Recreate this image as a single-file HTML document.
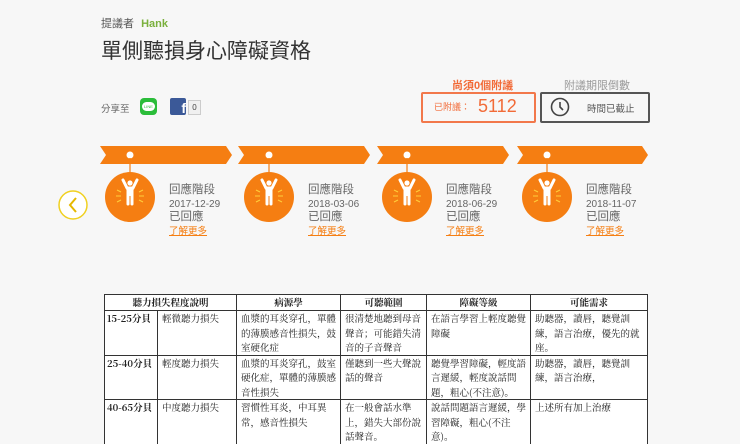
<!DOCTYPE html>
<html style="overflow:hidden;height:444px"><head><meta charset="utf-8"><style>
body{margin:0;width:740px;height:444px;background:#f7f7f7;font-family:"Liberation Sans","Noto Sans CJK TC",sans-serif;position:relative;overflow:hidden;color:#444}
.a{position:absolute;white-space:nowrap}
table{position:absolute;left:104px;top:294px;width:544px;border-collapse:collapse;background:#fff;font-family:"Noto Serif CJK SC","Noto Sans CJK TC",serif;font-size:9.5px;color:#222;table-layout:fixed}
td{border:1px solid #333;vertical-align:top;padding:0 4px;line-height:14.5px}
th{border:1px solid #333;font-weight:bold;font-size:9.5px;height:15px;padding:0;line-height:15px}
.t{font-size:11.5px;line-height:13.5px;color:#666}
</style></head><body>
<div class="a" style="left:101px;top:15px;font-size:11px;color:#555">提議者 <span style="color:#7ab03c;font-weight:bold;margin-left:4px">Hank</span></div>
<div class="a" style="left:101px;top:35px;font-size:21px;color:#333">單側聽損身心障礙資格</div>
<div class="a" style="left:101px;top:101px;font-size:9.5px;color:#666">分享至</div>
<div class="a" style="left:140px;top:98px;width:17px;height:17px;background:#2bbd3a;border-radius:4px"><div style="margin:4px 2px;height:9px;background:#fff;border-radius:5px;font-size:4px;color:#2bbd3a;text-align:center;line-height:9px">LINE</div></div>
<div class="a" style="left:170px;top:98px;width:16px;height:17px;background:#3b5998;border-radius:2px;color:#fff;font-weight:bold;font-size:14px;text-align:right;line-height:20px;overflow:hidden">f</div>
<div class="a" style="left:188px;top:100px;width:11px;height:13px;border:1px solid #ccc;background:#f0f0f0;font-size:8px;text-align:center;line-height:13px">0</div>
<div class="a" style="left:452px;top:77px;font-size:11px;color:#f26b38;font-weight:bold">尚須0個附議</div>
<div class="a" style="left:421px;top:92px;width:111px;height:27px;border:2px solid #f2784b;border-radius:2px;"></div>
<div class="a" style="left:434px;top:100px;font-size:9px;color:#f26b38">已附議：</div>
<div class="a" style="left:478px;top:96px;font-size:18px;color:#f26b38">5112</div>
<div class="a" style="left:564px;top:77px;font-size:11px;color:#999">附議期限倒數</div>
<div class="a" style="left:540px;top:92px;width:106px;height:27px;border:2px solid #555;border-radius:2px"></div>
<svg class="a" style="left:549px;top:96px" width="24" height="22" viewBox="0 0 24 22"><circle cx="11" cy="11" r="8.5" fill="none" stroke="#444" stroke-width="1.6"/><path d="M11 6v5l3 3" fill="none" stroke="#444" stroke-width="1.6"/></svg>
<div class="a" style="left:587px;top:101px;font-size:9.5px;color:#555">時間已截止</div>
<svg class="a" style="left:0;top:0" width="740" height="260">
<g fill="#f57e12">
<polygon points="100,146 226,146 232,155 226,164 100,164 106,155"/>
<polygon points="238,146 364,146 370,155 364,164 238,164 244,155"/>
<polygon points="377,146 503,146 509,155 503,164 377,164 383,155"/>
<polygon points="517,146 642,146 648,155 642,164 517,164 523,155"/>
</g>
<g id="n">
<circle cx="130" cy="155" r="3.5" fill="#fff"/><line x1="130" y1="158" x2="130" y2="172" stroke="#f57e12" stroke-width="1.2"/>
<circle cx="130" cy="197" r="25" fill="#f57e12"/>
<g fill="none" stroke="#fff" stroke-width="3" stroke-linecap="round"><path d="M123 180l4 8h6l4-8"/><path d="M128 190v14M132 190v14"/></g>
<circle cx="130" cy="183" r="2.6" fill="#fff"/><rect x="126.5" y="187" width="7" height="9" fill="#fff"/>
<g stroke="#ffcf3a" stroke-width="1"><path d="M117 190l4 2M116 196h5M117 202l4-2M143 190l-4 2M144 196h-5M143 202l-4-2"/></g>
</g>
<use href="#n" x="139"/><use href="#n" x="277"/><use href="#n" x="417"/>
<circle cx="73" cy="205" r="14" fill="#fff" stroke="#f0d020" stroke-width="1.5"/>
<path d="M76 198l-6 7 6 7" fill="none" stroke="#e6b800" stroke-width="2"/>
</svg>
<div class="a t" style="left:169px;top:184px">回應階段<br><span style="font-size:10px">2017-12-29</span><br>已回應<br><span style="color:#f57e12;text-decoration:underline;font-size:9.5px">了解更多</span></div>
<div class="a t" style="left:308px;top:184px">回應階段<br><span style="font-size:10px">2018-03-06</span><br>已回應<br><span style="color:#f57e12;text-decoration:underline;font-size:9.5px">了解更多</span></div>
<div class="a t" style="left:446px;top:184px">回應階段<br><span style="font-size:10px">2018-06-29</span><br>已回應<br><span style="color:#f57e12;text-decoration:underline;font-size:9.5px">了解更多</span></div>
<div class="a t" style="left:586px;top:184px">回應階段<br><span style="font-size:10px">2018-11-07</span><br>已回應<br><span style="color:#f57e12;text-decoration:underline;font-size:9.5px">了解更多</span></div>
<table>
<colgroup><col style="width:53px"><col style="width:79px"><col style="width:104px"><col style="width:86px"><col style="width:104px"><col></colgroup>
<tr><th colspan="2">聽力損失程度說明</th><th>病源學</th><th>可聽範圍</th><th>障礙等級</th><th>可能需求</th></tr>
<tr><td style="font-weight:bold;padding:0 2px">15-25分貝</td><td>輕微聽力損失</td><td>血漿的耳炎穿孔，單體的薄膜感音性損失，鼓室硬化症</td><td>很清楚地聽到母音聲音；可能錯失清音的子音聲音</td><td>在語言學習上輕度聽覺障礙</td><td>助聽器，讀唇，聽覺訓練，語言治療，優先的就座。</td></tr>
<tr><td style="font-weight:bold;padding:0 2px">25-40分貝</td><td>輕度聽力損失</td><td>血漿的耳炎穿孔，鼓室硬化症，單體的薄膜感音性損失</td><td>僅聽到一些大聲說話的聲音</td><td>聽覺學習障礙，輕度語言遲緩，輕度說話問題，粗心(不注意)。</td><td>助聽器，讀唇，聽覺訓練，語言治療，</td></tr>
<tr><td style="font-weight:bold;padding:0 2px">40-65分貝</td><td>中度聽力損失</td><td>習慣性耳炎，中耳異常，感音性損失</td><td>在一般會話水準上，錯失大部份說話聲音。</td><td>說話問題語言遲緩，學習障礙，粗心(不注意)。</td><td>上述所有加上治療</td></tr>
</table>
</body></html>
